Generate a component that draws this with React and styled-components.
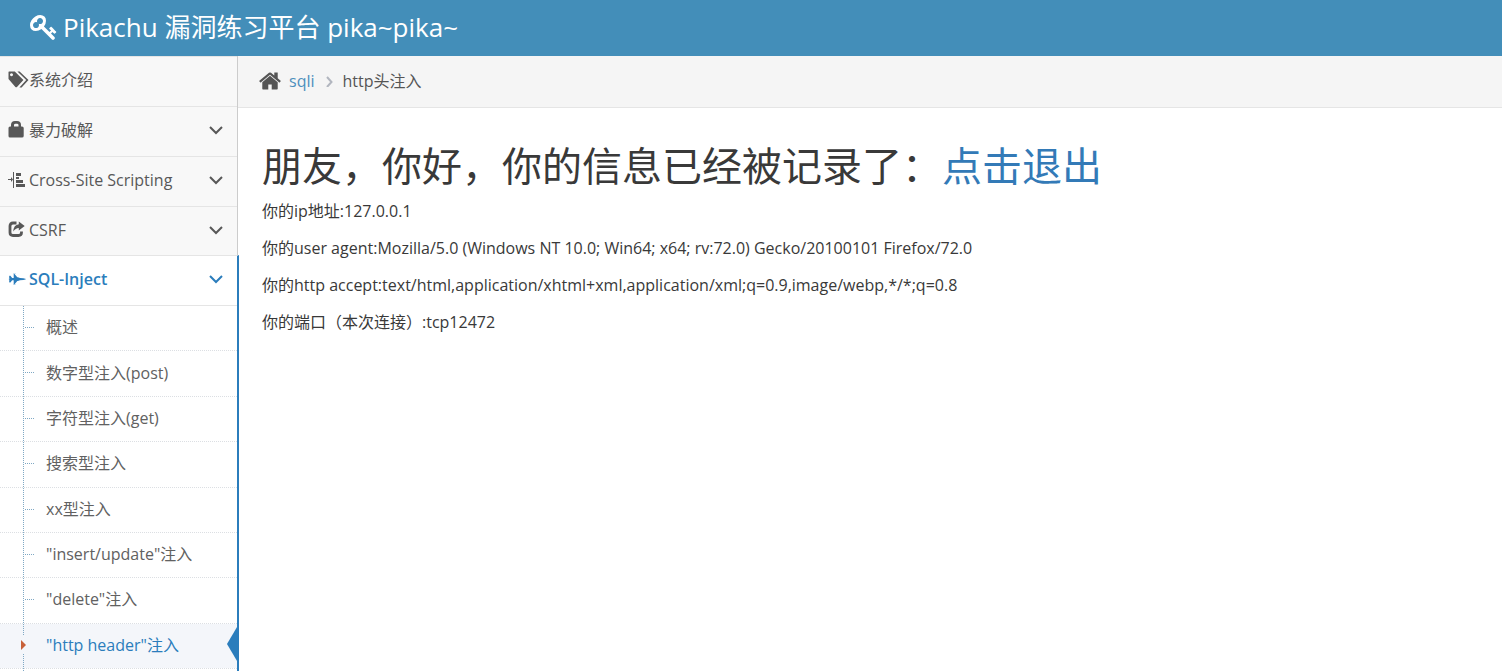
import React from "react";
import styled, { createGlobalStyle, css } from "styled-components";

const GlobalStyle = createGlobalStyle`
  *, *::before, *::after { box-sizing: border-box; }
  body {
    margin: 0;
    background: #fff;
    color: #393939;
    font-family: "Open Sans", "Noto Sans CJK SC", sans-serif;
    font-size: 16px;
    line-height: 24px;
  }
  a { color: #337ab7; text-decoration: none; }
  a:hover { text-decoration: underline; }
`;

const Page = styled.div`
  display: flex;
  flex-direction: column;
  height: 100vh;
  overflow: hidden;
`;

const Navbar = styled.header`
  flex: none;
  display: flex;
  align-items: center;
  height: 56px;
  padding: 0 30px 2px;
  background: #438eb9;
`;

const Brand = styled.a`
  && {
    display: flex;
    align-items: center;
    gap: 5px;
    color: #fff;
    font-size: 26px;
    line-height: 40px;
    white-space: nowrap;
  }
`;

const Body = styled.div`
  flex: 1;
  min-height: 0;
  display: flex;
`;

const Sidebar = styled.nav`
  flex: none;
  width: 238px;
  background: #f2f2f2;
  border-right: 1px solid #ccc;
`;

const NavList = styled.ul`
  list-style: none;
  margin: 0;
  padding: 0;
  width: 239px;
`;

const NavItem = styled.li`
  position: relative;
  border-top: 1px solid #e5e5e5;
  margin-right: 2px;
  background: #f8f8f8;
  ${(p) =>
    p.$open &&
    css`
      margin-top: -1px;
      margin-right: 0;
      border-right: 2px solid #2b7dbc;
      background: #fff;
    `}
`;

const NavButton = styled.button`
  display: flex;
  align-items: center;
  width: 100%;
  height: 49px;
  padding: 0 14px 4px 8px;
  border: 0;
  background: transparent;
  color: ${(p) => (p.$open ? "#2b7dbc" : "#585858")};
  font: inherit;
  font-weight: ${(p) => (p.$open ? 600 : 400)};
  text-align: left;
  cursor: pointer;
`;

const NavLabel = styled.span`
  flex: 1;
`;

const IconSlot = styled.span`
  flex: none;
  display: flex;
  align-items: center;
  width: 21px;
`;

const SubList = styled.ul`
  position: relative;
  display: grid;
  grid-auto-rows: 1fr;
  min-height: 366px;
  list-style: none;
  margin: 0;
  padding: 0 0 2px;
  border-top: 1px solid #e5e5e5;
  &::before {
    content: "";
    position: absolute;
    z-index: 1;
    top: 0;
    bottom: 0;
    left: 23px;
    border-left: 1px dotted #7fa8c4;
  }
`;

const SubItem = styled.li`
  position: relative;
  display: grid;
  border-bottom: 1px dotted #dcdfe3;
`;

const SubLink = styled.a`
  && {
    display: flex;
    align-items: center;
    padding: 0 0 2px 46px;
    color: ${(p) => (p.$active ? "#2b7dbc" : "#616161")};
    background: ${(p) => (p.$active ? "#f4f6fa" : "#fff")};
  }
  ${(p) =>
    !p.$active &&
    css`
      &::before {
        content: "";
        position: absolute;
        top: 21px;
        left: 25px;
        width: 9px;
        border-top: 1px dotted #7fa8c4;
      }
    `}
`;

const Caret = styled.svg`
  position: absolute;
  z-index: 2;
  left: 20px;
  top: 12px;
  background: #f4f6fa;
`;

const Pointer = styled.svg`
  position: absolute;
  right: 0;
  top: 3px;
`;

const Main = styled.main`
  flex: 1;
  min-width: 0;
`;

const Breadcrumb = styled.ol`
  display: flex;
  align-items: center;
  list-style: none;
  margin: 0;
  height: 52px;
  padding: 0 20px 2px;
  background: #f5f5f5;
  border-bottom: 1px solid #e5e5e5;
  color: #555;
`;

const Crumb = styled.li`
  display: flex;
  align-items: center;
  gap: 7px;
  a { color: #4c8fbd; }
  & + & { gap: 10px; padding-left: 11px; }
`;

const Content = styled.section`
  padding: 33px 24px 24px;
`;

const Title = styled.h1`
  margin: 0 0 8px;
  font-size: 40px;
  line-height: 50px;
  font-weight: 400;
`;

const Line = styled.p`
  margin: 0 0 13px;
`;

const Fa = ({ d, size, w = 1792 }) => (
  <svg width={Math.round((size * w) / 1792)} height={size} viewBox={`0 0 ${w} 1792`} fill="currentColor" aria-hidden="true">
    <path d={d} />
  </svg>
);

const KEY =
  "M832 512q0-80-56-136t-136-56-136 56-56 136q0 42 19 83-41-19-83-19-80 0-136 56t-56 136 56 136 136 56 136-56 56-136q0-42-19-83 41 19 83 19 80 0 136-56t56-136zm851 704q0 17-49 66t-66 49q-9 0-28.5-16t-36.5-33-38.5-40-24.5-26l-96 96 220 220q28 28 28 68 0 42-39 81t-81 39q-40 0-68-28l-671-671q-176 131-365 131-163 0-265.5-102.5t-102.5-265.5q0-160 95-313t248-248 313-95q163 0 265.5 102.5t102.5 265.5q0 189-131 365l355 355 96-96q-3-3-26-24.5t-40-38.5-33-36.5-16-28.5q0-17 49-66t66-49q13 0 23 10 6 6 46 44.5t82 79.5 86.5 86 73 78 28.5 41z";
const HOME =
  "M1472 992v480q0 26-19 45t-45 19h-384v-384h-256v384h-384q-26 0-45-19t-19-45v-480q0-1 .5-3t.5-3l575-474 575 474q1 2 1 6zm223-69l-62 74q-8 9-21 11h-3q-13 0-21-7l-692-577-692 577q-12 8-24 7-13-2-21-11l-62-74q-8-10-7-23.5t11-21.5l719-599q32-26 76-26t76 26l244 204v-195q0-14 9-23t23-9h192q14 0 23 9t9 23v408l219 182q10 8 11 21.5t-7 23.5z";
const JET =
  "M1920 960q-1 32-288 96l-352 32-224 64h-64l-293 352h69q26 0 45 4.5t19 11.5-19 11.5-45 4.5h-224v-32h64v-416h-160l-192 224h-96l-32-32v-192h32v-32h128v-8l-192-24v-128l192-24v-8h-128v-32h-32v-192l32-32h96l192 224h160v-416h-64v-32h224q26 0 45 4.5t19 11.5-19 11.5-45 4.5h-69l293 352h64l224 64 352 32q261 58 287 93z";

const TagsIcon = () => (
  <svg width="21" height="17" viewBox="0 0 21 17" fill="currentColor" aria-hidden="true">
    <path fillRule="evenodd" d="M1 0.5H6.8L15.4 8.9 9 16Q8.2 16.7 7.4 16L0.5 8V1.2Q.5.5 1 .5ZM3.5 2.2a1.5 1.5 0 1 0 .01 0Z" />
    <path d="M9.4 .5H11.6L20.5 9 13.6 16.5H11.4L18.2 9.1Z" />
  </svg>
);
const LockIcon = () => (
  <svg width="16" height="17" viewBox="0 0 16 17" fill="currentColor" aria-hidden="true">
    <path fillRule="evenodd" d="M3 5.5V4Q3 0 7 0H9Q13 0 13 4V5.5H14Q15.7 5.5 15.7 7V15Q15.7 16.5 14 16.5H2Q.5 16.5.5 15V7Q.5 5.5 2 5.5ZM6 5.5H10.5V4Q10.5 2.7 9 2.7H7.5Q6 2.7 6 4Z" />
  </svg>
);
const AlignIcon = () => (
  <svg width="18" height="16" viewBox="0 0 18 16" fill="currentColor" aria-hidden="true">
    <path d="M0 7H3V5L5 7.5 3 10V8H0ZM5 0H6V16H5ZM8 1H13V4H8ZM8 5H11V7H8ZM8 8H15V11H8ZM8 12H17V15H8Z" />
  </svg>
);
const ShareIcon = () => (
  <svg width="17" height="17" viewBox="0 0 17 17" aria-hidden="true">
    <path d="M8.5 2H5Q2 2 2 5V11.5Q2 14.5 5 14.5H10.5Q13.5 14.5 13.5 11.5V10.5" fill="none" stroke="currentColor" strokeWidth="2.8" />
    <path d="M10.8 0.5 16.7 5 10.8 9.6V7Q7.5 7 5.3 10.5 5.6 3.7 10.8 3.2Z" fill="currentColor" />
  </svg>
);
const ChevronDown = () => (
  <svg width="14" height="10" viewBox="0 0 14 10" fill="none" stroke="currentColor" strokeWidth="2" aria-hidden="true">
    <path d="M1 2 7 8 13 2" />
  </svg>
);
const ChevronRight = () => (
  <svg width="7" height="12" viewBox="0 0 7 12" fill="none" stroke="#b2b6bf" strokeWidth="2" aria-hidden="true">
    <path d="M1 2 5.5 7 1 12" />
  </svg>
);

const sections = [
  { label: "系统介绍", icon: <TagsIcon />, leaf: true },
  { label: "暴力破解", icon: <LockIcon /> },
  { label: "Cross-Site Scripting", icon: <AlignIcon /> },
  { label: "CSRF", icon: <ShareIcon /> },
  {
    label: "SQL-Inject",
    icon: <Fa d={JET} size={17} w={1920} />,
    children: [
      "概述",
      "数字型注入(post)",
      "字符型注入(get)",
      "搜索型注入",
      "xx型注入",
      '"insert/update"注入',
      '"delete"注入',
      '"http header"注入',
    ],
  },
];
const CURRENT = '"http header"注入';

export default function App() {
  return (
    <Page>
      <GlobalStyle />
      <Navbar>
        <Brand href="#">
          <Fa d={KEY} size={28} />
          Pikachu 漏洞练习平台 pika~pika~
        </Brand>
      </Navbar>
      <Body>
        <Sidebar>
          <NavList>
            {sections.map((s) => (
              <NavItem key={s.label} $open={!!s.children}>
                <NavButton type="button" $open={!!s.children}>
                  <IconSlot>{s.icon}</IconSlot>
                  <NavLabel>{s.label}</NavLabel>
                  {!s.leaf && <ChevronDown />}
                </NavButton>
                {s.children && (
                  <SubList>
                    {s.children.map((c) => (
                      <SubItem key={c}>
                        <SubLink href="#" $active={c === CURRENT}>
                          {c}
                        </SubLink>
                        {c === CURRENT && (
                          <>
                            <Caret width="7" height="18" viewBox="0 0 7 18" aria-hidden="true">
                              <path d="M1 4 6 9 1 14Z" fill="#c86139" />
                            </Caret>
                            <Pointer width="10" height="34" viewBox="0 0 10 34" aria-hidden="true">
                              <path d="M10 0V34L0 17Z" fill="#2b7dbc" />
                            </Pointer>
                          </>
                        )}
                      </SubItem>
                    ))}
                  </SubList>
                )}
              </NavItem>
            ))}
          </NavList>
        </Sidebar>
        <Main>
          <Breadcrumb>
            <Crumb>
              <Fa d={HOME} size={24} />
              <a href="#">sqli</a>
            </Crumb>
            <Crumb>
              <ChevronRight />
              http头注入
            </Crumb>
          </Breadcrumb>
          <Content>
            <Title>
              朋友，你好，你的信息已经被记录了：<a href="#">点击退出</a>
            </Title>
            <Line>你的ip地址:127.0.0.1</Line>
            <Line>你的user agent:Mozilla/5.0 (Windows NT 10.0; Win64; x64; rv:72.0) Gecko/20100101 Firefox/72.0</Line>
            <Line>你的http accept:text/html,application/xhtml+xml,application/xml;q=0.9,image/webp,*/*;q=0.8</Line>
            <Line>你的端口（本次连接）:tcp12472</Line>
          </Content>
        </Main>
      </Body>
    </Page>
  );
}
